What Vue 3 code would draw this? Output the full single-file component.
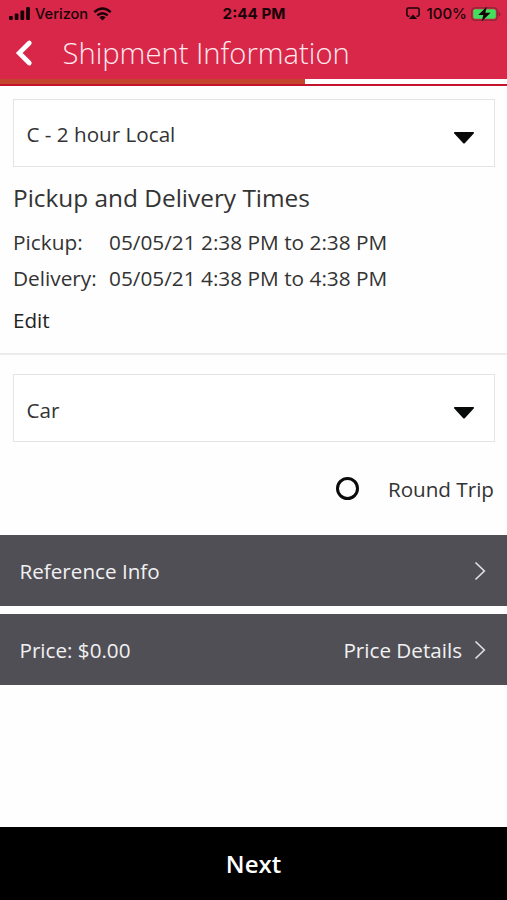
<script setup>
const times = [
  { label: 'Pickup:', value: '05/05/21 2:38 PM to 2:38 PM' },
  { label: 'Delivery:', value: '05/05/21 4:38 PM to 4:38 PM' },
]
</script>

<template>
  <div class="screen">
    <header class="header">
      <div class="status">
        <div class="carrier">
          <svg class="signal" width="22" height="13" viewBox="0 0 22 13">
            <rect x="0" y="9" width="3.800" height="4" rx="1" />
            <rect x="5.700" y="6.500" width="3.800" height="6.500" rx="1" />
            <rect x="11.400" y="3.500" width="3.800" height="9.500" rx="1" />
            <rect x="17.100" y="0" width="3.800" height="13" rx="1" />
          </svg>
          <span class="carrier-name">Verizon</span>
          <svg class="wifi" width="19" height="14" viewBox="0 0 19 14">
            <path d="M1.300 5.100Q9.500-2 17.700 5.100M4.300 8.400Q9.500 4 14.700 8.400" fill="none" stroke="#170207" stroke-width="2.400" />
            <path d="M6.300 10.300Q9.500 7.800 12.700 10.300L9.500 13.600Z" />
          </svg>
        </div>
        <span class="clock">2:44 PM</span>
        <div class="power">
          <svg class="airplay" width="14" height="13" viewBox="0 0 14 13">
            <path d="M3.500 9.200H2.300Q.9 9.200.9 7.800V2.200Q.9.900 2.300.900H11.700Q13.100.900 13.100 2.200V7.800Q13.100 9.200 11.700 9.200H10.500" fill="none" stroke="#170207" stroke-width="1.500" />
            <path d="M7 7.500L11.200 12H2.800Z" />
          </svg>
          <span class="percent">100%</span>
          <svg class="battery" width="30" height="16" viewBox="0 0 30 16">
            <rect x=".7" y="1.800" width="25.600" height="12.400" rx="3.500" fill="none" stroke="#8b2635" stroke-width="1.300" />
            <rect x="2.200" y="3.200" width="22.600" height="9.600" rx="2" fill="#43e05f" />
            <path d="M27.500 5.500Q29.600 6.500 29.600 8T27.500 10.500Z" fill="#8b2635" />
            <path d="M15.800.7L7.200 9H12.300L10.800 15.300L19.600 6.800H14.300Z" />
          </svg>
        </div>
      </div>
      <div class="titlebar">
        <svg class="back" width="18" height="28" viewBox="0 0 18 28">
          <path d="M14.300 4L4.200 14L14.300 24" fill="none" stroke="#fff" stroke-width="4.700" stroke-linecap="round" stroke-linejoin="miter" />
        </svg>
        <h1 class="title">Shipment Information</h1>
      </div>
      <div class="progress"><div class="remaining"></div></div>
    </header>

    <main class="content">
      <section class="service">
        <div class="select">
          <span>C - 2 hour Local</span>
          <svg class="caret" width="22" height="14" viewBox="0 0 22 14"><path d="M1.500 1H20.500Q21.500 1.600 20.700 2.600L12 12Q11 13 10 12L1.300 2.600Q.500 1.600 1.500 1Z" /></svg>
        </div>
        <h2 class="heading">Pickup and Delivery Times</h2>
        <div v-for="t in times" :key="t.label" class="time">
          <span class="time-label">{{ t.label }}</span>
          <span>{{ t.value }}</span>
        </div>
        <div class="edit">Edit</div>
      </section>
      <section class="vehicle">
        <div class="select">
          <span>Car</span>
          <svg class="caret" width="22" height="14" viewBox="0 0 22 14"><path d="M1.500 1H20.500Q21.500 1.600 20.700 2.600L12 12Q11 13 10 12L1.300 2.600Q.500 1.600 1.500 1Z" /></svg>
        </div>
        <div class="trip">
          <span class="radio"></span>
          <span class="trip-label">Round Trip</span>
        </div>
      </section>
      <div class="bar">
        <span>Reference Info</span>
        <svg class="chevron" width="12" height="20" viewBox="0 0 12 20"><path d="M1.500 1.500L10.300 10L1.500 18.500" /></svg>
      </div>
      <div class="bar">
        <span>Price: $0.00</span>
        <span>Price Details</span>
        <svg class="chevron" width="12" height="20" viewBox="0 0 12 20"><path d="M1.500 1.500L10.300 10L1.500 18.500" /></svg>
      </div>
    </main>
    <footer class="next">Next</footer>
  </div>
</template>

<style>
body { background: #fff; }
</style>

<style scoped>
.screen {
  display: flex;
  flex-direction: column;
  width: 507px;
  height: 900px;
  overflow: hidden;
  font-family: "Open Sans", "Noto Sans", sans-serif;
  font-size: 20.65px;
  color: #333;
  white-space: nowrap;
  background: #fefefe;
}
svg { display: block; flex: none; }
.header {
  display: flex;
  flex-direction: column;
  height: 86px;
  box-sizing: border-box;
  flex: none;
  background: #d82749;
  border-bottom: 2px solid #c3142c;
}
.status {
  display: grid;
  grid-template-columns: 1fr auto 1fr;
  align-items: center;
  height: 27px;
  padding: 0 6px 0 9px;
  font-family: Inter, sans-serif;
  font-size: 14.6px;
  color: #170207;
  fill: #170207;
}
.carrier, .power { display: flex; align-items: center; }
.power { justify-content: flex-end; }
.carrier-name { margin-left: 4px; font-weight: 500; }
.wifi { margin-left: 5px; }
.clock { margin-right: 2px; font-size: 15.2px; font-weight: 700; }
.percent { margin: 0 4px 0 7px; font-size: 15px; font-weight: 500; }
.titlebar {
  display: flex;
  align-items: center;
  height: 52px;
  padding-left: 15px;
}
.title {
  margin: 0 0 0 29.5px;
  font-size: 29.2px;
  line-height: 40px;
  font-weight: 300;
  color: #fdeaee;
}
.progress {
  display: flex;
  justify-content: flex-end;
  height: 5px;
  background: #c4452e;
}
.remaining { width: 202px; background: #fff; }
.service {
  height: 269px;
  box-sizing: border-box;
  padding: 13px 12px 0 13px;
  border-bottom: 2px solid #ececec;
}
.vehicle { height: 180px; box-sizing: border-box; padding: 19px 12px 0 13px; }
.select {
  display: flex;
  align-items: center;
  justify-content: space-between;
  height: 68px;
  padding: 0 19px 0 12.5px;
  box-sizing: border-box;
  border: 1px solid #e3e4e4;
  background: #fff;
}
.select > span { margin-top: 2px; }
.vehicle .select > span { margin-top: 4px; }
.caret { margin-top: 9px; fill: #080a09; }
.heading {
  margin: 13px 0 8px;
  font-size: 24.4px;
  line-height: 36px;
  font-weight: 400;
}
.time { display: flex; height: 36px; font-size: 20.8px; line-height: 36px; }
.time-label { width: 96px; }
.edit { margin-top: 6px; line-height: 36px; color: #222; }
.trip {
  display: flex;
  align-items: center;
  justify-content: flex-end;
  gap: 29px;
  height: 36px;
  margin: 28px 1px 0 0;
}
.trip-label { margin-top: 1px; }
.radio {
  width: 23px;
  height: 23px;
  box-sizing: border-box;
  border: 3px solid #0b0b0b;
  border-radius: 50%;
}
.bar {
  display: flex;
  align-items: center;
  height: 71px;
  padding: 1px 21px 0 19.5px;
  box-sizing: border-box;
  background: #504f56;
  color: #f1f1f3;
}
.bar + .bar { margin-top: 8px; }
.chevron { margin-left: 12px; fill: none; stroke: #dedee1; stroke-width: 1.7; }
.bar > span:first-child { margin-right: auto; }
.next {
  display: flex;
  align-items: center;
  justify-content: center;
  height: 73px;
  margin-top: auto;
  box-sizing: border-box;
  background: #000;
  color: #fff;
  font-size: 24px;
  font-weight: 600;
}
</style>
